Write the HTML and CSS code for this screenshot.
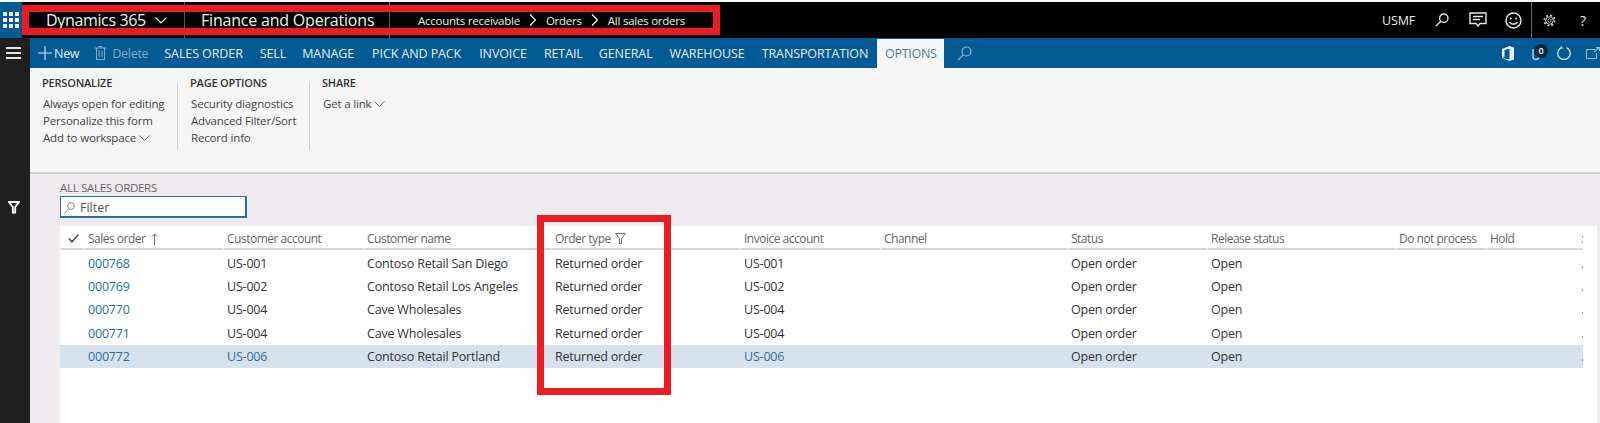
FILE: index.html
```html
<!DOCTYPE html>
<html lang="en">
<head>
<meta charset="utf-8">
<title>All sales orders</title>
<link rel="stylesheet" href="styles.css">
</head>
<body>
<div class="app">
  <header class="topbar">
    <div class="waffle">
      <svg width="16" height="16" viewBox="0 0 16 16" fill="#fff"><rect x="0" y="0" width="4" height="4"/><rect x="6" y="0" width="4" height="4"/><rect x="12" y="0" width="4" height="4"/><rect x="0" y="6" width="4" height="4"/><rect x="6" y="6" width="4" height="4"/><rect x="12" y="6" width="4" height="4"/><rect x="0" y="12" width="4" height="4"/><rect x="6" y="12" width="4" height="4"/><rect x="12" y="12" width="4" height="4"/></svg>
    </div>
    <div class="brand">
      <span class="brand-name">Dynamics 365</span>
      <svg class="brand-chev" width="12" height="7" viewBox="0 0 12 7" fill="none" stroke="#fff" stroke-width="1.2"><path d="M.5.5 6 6 11.500.5"/></svg>
    </div>
    <div class="product">Finance and Operations</div>
    <nav class="crumbs">
      <span>Accounts receivable</span>
      <svg width="7" height="12" viewBox="0 0 7 12" fill="none" stroke="#fff" stroke-width="1.2"><path d="M1 .5 6.500 6 1 11.500"/></svg>
      <span>Orders</span>
      <svg width="7" height="12" viewBox="0 0 7 12" fill="none" stroke="#fff" stroke-width="1.2"><path d="M1 .5 6.500 6 1 11.500"/></svg>
      <span>All sales orders</span>
    </nav>
    <div class="top-actions">
      <span class="company">USMF</span>
      <svg class="act-search" width="14" height="14" viewBox="0 0 14 14" fill="none" stroke="#e8e8e8" stroke-width="1.3"><circle cx="8.800" cy="5.200" r="4.200"/><path d="M5.800 8.200 1 13"/></svg>
      <svg class="act-chat" width="18" height="16" viewBox="0 0 18 16" fill="none" stroke="#e8e8e8" stroke-width="1.400"><path d="M1 1h16v10.500H11L9 14l-2-2.500H1z"/><path d="M4 4.500h10M4 7.500h7"/></svg>
      <svg class="act-smile" width="17" height="17" viewBox="0 0 17 17" fill="none" stroke="#e8e8e8" stroke-width="1.400"><circle cx="8.500" cy="8.500" r="7.500"/><circle cx="5.800" cy="6.500" r="1" fill="#e8e8e8" stroke="none"/><circle cx="11.200" cy="6.500" r="1" fill="#e8e8e8" stroke="none"/><path d="M4.500 10.200c1.800 2.800 6.200 2.800 8 0"/></svg>
      <span class="act-divider"></span>
      <svg class="act-gear" width="13" height="13" viewBox="0 0 13 13" fill="none" stroke="#c8c8c8"><circle cx="6.500" cy="6.500" r="1.700"/><circle cx="6.500" cy="6.500" r="3.800" stroke-width="1"/><circle cx="6.500" cy="6.500" r="5.200" stroke-width="1.800" stroke-dasharray="2 2.080"/></svg>
      <span class="act-help">?</span>
    </div>
  </header>

  <div class="body">
    <aside class="sidebar">
      <div class="hamburger"><span></span><span></span><span></span></div>
      <svg class="side-filter" width="12" height="13" viewBox="0 0 12 13" fill="none" stroke="#fff" stroke-width="1.800"><path d="M1 1h10L7.200 6v5.500H4.800V6z"/></svg>
    </aside>
    <main class="main">
      <div class="actionbar">
        <div class="action new">
          <svg width="14" height="14" viewBox="0 0 14 14" stroke="#d6e6f2" stroke-width="1.100"><path d="M7 0v14M0 7h14"/></svg>
          <span>New</span>
        </div>
        <div class="action delete">
          <svg width="11" height="14" viewBox="0 0 11 14" fill="none" stroke="#83a9c4" stroke-width="1.100"><path d="M0 2h11M4 2V.5h3V2M1.500 2v11.500h8V2M4 4.500v6.500M7 4.500v6.500"/></svg>
          <span>Delete</span>
        </div>
        <div class="tab t-sales">SALES ORDER</div>
        <div class="tab t-sell">SELL</div>
        <div class="tab t-manage">MANAGE</div>
        <div class="tab t-pick">PICK AND PACK</div>
        <div class="tab t-invoice">INVOICE</div>
        <div class="tab t-retail">RETAIL</div>
        <div class="tab t-general">GENERAL</div>
        <div class="tab t-ware">WAREHOUSE</div>
        <div class="tab t-trans">TRANSPORTATION</div>
        <div class="tab-active">OPTIONS</div>
        <svg class="tab-search" width="15" height="15" viewBox="0 0 15 15" fill="none" stroke="#8fb6d2" stroke-width="1.200"><circle cx="9.500" cy="5.500" r="4.500"/><path d="M6.200 8.800 1 14"/></svg>
        <div class="bar-right">
          <svg class="office" width="12" height="15" viewBox="0 0 12 15"><path fill="#e6f0f7" d="M0 3 7.500 0 12 1.500v12L7.500 15 0 12.200l7.500 1V2.800L2.500 4v7L0 12.200z"/></svg>
          <div class="clip">
            <svg width="8" height="15" viewBox="0 0 8 15" fill="none" stroke="#a9cbe2" stroke-width="1.500"><path d="M1 3v7.500a3 3 0 0 0 6 0V3"/></svg>
            <span class="badge">0</span>
          </div>
          <svg class="refresh" width="14" height="14" viewBox="0 0 14 14" fill="none" stroke="#cfe0ec" stroke-width="1.300"><path d="M4.500 1.600A6.200 6.200 0 1 0 9.500 1.600"/><path d="M4 .2 4.500 1.800 6.200 2.400" stroke-width="1"/></svg>
          <svg class="popout" width="14" height="12" viewBox="0 0 14 12" fill="none" stroke="#8fb6d2" stroke-width="1.100"><path d="M9 2.500H.5v9h10V6M8 5l5-4M10 .6h3.500V4"/></svg>
        </div>
      </div>

      <section class="pane">
        <div class="group g-personalize">
          <h3>PERSONALIZE</h3>
          <p>Always open for editing</p>
          <p>Personalize this form</p>
          <p class="chev-item">Add to workspace <svg width="11" height="6" viewBox="0 0 11 6" fill="none" stroke="#777"><path d="M.5.500 5.500 5.500 10.500.5"/></svg></p>
        </div>
        <span class="sep"></span>
        <div class="group g-page">
          <h3>PAGE OPTIONS</h3>
          <p>Security diagnostics</p>
          <p>Advanced Filter/Sort</p>
          <p>Record info</p>
        </div>
        <span class="sep"></span>
        <div class="group g-share">
          <h3>SHARE</h3>
          <p class="chev-item">Get a link <svg width="11" height="6" viewBox="0 0 11 6" fill="none" stroke="#777"><path d="M.5.500 5.500 5.500 10.500.5"/></svg></p>
        </div>
      </section>

      <section class="content">
        <div class="caption">ALL SALES ORDERS</div>
        <div class="filter">
          <svg width="11" height="12" viewBox="0 0 11 12" fill="none" stroke="#888"><circle cx="7" cy="4" r="3.400"/><path d="M4.500 6.500 .5 11.500"/></svg>
          <span>Filter</span>
        </div>
        <div class="grid">
          <div class="row head">
            <div class="cell check"><svg width="11" height="9" viewBox="0 0 11 9" fill="none" stroke="#444" stroke-width="1.500"><path d="M.8 4.500 4 7.800 10.200.8"/></svg></div>
            <div class="cell">Sales order <svg class="sort" width="7" height="12" viewBox="0 0 7 12" fill="none" stroke="#666"><path d="M3.500 12V1M1 3.500 3.500 1 6 3.500"/></svg></div>
            <div class="cell">Customer account</div>
            <div class="cell">Customer name</div>
            <div class="cell">Order type <svg class="funnel" width="11" height="11" viewBox="0 0 11 11" fill="none" stroke="#777"><path d="M.5.500h10L6.500 5.500v5h-2v-5z"/></svg></div>
            <div class="cell">Invoice account</div>
            <div class="cell">Channel</div>
            <div class="cell">Status</div>
            <div class="cell">Release status</div>
            <div class="cell">Do not process</div>
            <div class="cell">Hold</div>
            <div class="cell end-cell">:</div>
          </div>
          <div class="row">
            <div class="cell"></div><div class="cell link">000768</div><div class="cell">US-001</div><div class="cell">Contoso Retail San Diego</div><div class="cell">Returned order</div><div class="cell">US-001</div><div class="cell"></div><div class="cell">Open order</div><div class="cell">Open</div><div class="cell"></div><div class="cell"></div><div class="cell end-cell">.</div>
          </div>
          <div class="row">
            <div class="cell"></div><div class="cell link">000769</div><div class="cell">US-002</div><div class="cell">Contoso Retail Los Angeles</div><div class="cell">Returned order</div><div class="cell">US-002</div><div class="cell"></div><div class="cell">Open order</div><div class="cell">Open</div><div class="cell"></div><div class="cell"></div><div class="cell end-cell">.</div>
          </div>
          <div class="row">
            <div class="cell"></div><div class="cell link">000770</div><div class="cell">US-004</div><div class="cell">Cave Wholesales</div><div class="cell">Returned order</div><div class="cell">US-004</div><div class="cell"></div><div class="cell">Open order</div><div class="cell">Open</div><div class="cell"></div><div class="cell"></div><div class="cell end-cell">.</div>
          </div>
          <div class="row">
            <div class="cell"></div><div class="cell link">000771</div><div class="cell">US-004</div><div class="cell">Cave Wholesales</div><div class="cell">Returned order</div><div class="cell">US-004</div><div class="cell"></div><div class="cell">Open order</div><div class="cell">Open</div><div class="cell"></div><div class="cell"></div><div class="cell end-cell">.</div>
          </div>
          <div class="row selected">
            <div class="cell"></div><div class="cell link">000772</div><div class="cell link">US-006</div><div class="cell">Contoso Retail Portland</div><div class="cell">Returned order</div><div class="cell link">US-006</div><div class="cell"></div><div class="cell">Open order</div><div class="cell">Open</div><div class="cell"></div><div class="cell"></div><div class="cell end-cell">.</div>
          </div>
        </div>
      </section>
    </main>
  </div>
  <div class="note note-top"></div>
  <div class="note note-col"></div>
</div>
</body>
</html>
```

FILE: styles.css
```css
* { box-sizing: border-box; }
html, body { margin: 0; height: 100%; overflow: hidden; background: #fff; }
body { font-family: "Open Sans", "Noto Sans", sans-serif; font-size: 12px; color: #333; }
svg { display: block; flex: none; }

.app { position: relative; width: 1600px; height: 423px; padding-top: 2px; display: flex; flex-direction: column; overflow: hidden; }

/* top bar */
.topbar { height: 36px; flex: none; background: #000; color: #fff; display: flex; align-items: center; }
.waffle { width: 22px; align-self: stretch; background: #005a93; display: flex; align-items: center; justify-content: center; }
.brand { width: 163px; padding-left: 24px; display: flex; align-items: center; gap: 9px; align-self: stretch; border-right: 1px solid #555; }
.brand-name { font-size: 16px; letter-spacing: -.35px; color: #f2f2f2; }
.product { width: 205px; padding-left: 16px; align-self: stretch; display: flex; align-items: center; border-right: 1px solid #555; font-size: 16px; letter-spacing: -.2px; color: #f2f2f2; }
.crumbs { padding-left: 28px; display: flex; align-items: center; gap: 9.500px; font-size: 11.500px; letter-spacing: -.24px; color: #eee; }
.top-actions { margin-left: auto; align-self: stretch; display: flex; align-items: center; }
.company { font-size: 12.500px; color: #eee; letter-spacing: -.2px; }
.act-search { margin-left: 20px; }
.act-chat { margin-left: 20px; }
.act-smile { margin-left: 18px; }
.act-divider { width: 1px; align-self: stretch; background: #666; margin-left: 9px; }
.act-gear { margin-left: 11px; margin-right: -1px; }
.act-help { margin-left: 25px; margin-right: 14px; font-size: 14px; color: #e8e8e8; }

/* frame */
.body { flex: 1; min-height: 0; display: flex; }
.sidebar { width: 30px; flex: none; background: #1f1f1f; display: flex; flex-direction: column; align-items: center; }
.hamburger { height: 30px; width: 100%; display: flex; flex-direction: column; align-items: center; justify-content: center; gap: 3px; padding-right: 3px; }
.hamburger span { display: block; width: 15px; height: 2px; background: #e6e6e6; }
.side-filter { margin-top: 133px; margin-right: 3px; }
.main { flex: 1; min-width: 0; display: flex; flex-direction: column; }

/* action bar */
.actionbar { height: 30px; flex: none; background: #005a93; display: flex; align-items: center; font-size: 12.500px; color: #e3eef6; letter-spacing: -.1px; }
.action { display: flex; align-items: center; letter-spacing: -.28px; }
.new { margin-left: 8px; gap: 2px; }
.delete { margin-left: 16px; gap: 6px; color: #83a9c4; }
.tab { white-space: nowrap; }
.t-sales { margin-left: 16px; }
.t-sell { margin-left: 17px; }
.t-manage { margin-left: 16px; }
.t-pick { margin-left: 18px; }
.t-invoice { margin-left: 18px; }
.t-retail { margin-left: 17px; }
.t-general { margin-left: 16px; }
.t-ware { margin-left: 17px; }
.t-trans { margin-left: 17px; }
.tab-active { margin-left: 9px; width: 67px; align-self: stretch; margin-top: 1px; background: #f6f6f6; color: #4d7ba3; display: flex; align-items: center; justify-content: center; letter-spacing: -.28px; }
.tab-search { margin-left: 13px; }
.bar-right { margin-left: auto; display: flex; align-items: center; }
.office { margin-right: 18px; }
.clip { position: relative; margin-right: 17px; }
.badge { position: absolute; left: 2px; top: -2px; width: 14px; height: 14px; border-radius: 50%; background: #0b2a3f; color: #fff; font-size: 9px; font-weight: 600; line-height: 14px; text-align: center; letter-spacing: 0; }
.refresh { margin-right: 15px; }

/* ribbon pane */
.pane { height: 106px; flex: none; background: #f6f6f6; border-bottom: 2px solid #cfcfcf; display: flex; align-items: flex-start; padding-top: 7px; }
.group { color: #444; letter-spacing: -.17px; font-size: 11.500px; }
.sep { width: 1px; height: 67px; margin-top: 8px; background: #d0d0d0; flex: none; }
.g-personalize { width: 147px; padding-left: 12px; }
.g-page { width: 131px; padding-left: 12px; }
.g-share { padding-left: 12px; }
.group h3 { margin: 0 0 5px; font-size: 11px; line-height: 15px; font-weight: 600; color: #333; letter-spacing: -.2px; }
.group p { margin: 0; height: 17px; line-height: 17px; padding-left: 1px; white-space: nowrap; }
.chev-item { display: flex; align-items: center; gap: 3px; }

/* content */
.content { flex: 1; min-height: 0; background: #efebef; padding: 6px 3px 0 30px; display: flex; flex-direction: column; }
.caption { height: 16px; line-height: 16px; font-size: 11.500px; letter-spacing: -.3px; color: #666; }
.filter { width: 187px; height: 22px; flex: none; background: #fff; border: 2px solid #2a6f9e; border-width: 1px 2px 2px 1px; display: flex; align-items: center; gap: 5px; padding: 2px 0 0 3px; font-size: 12.500px; color: #555; }
.grid { flex: 1; margin-top: 8px; background: #fff; }
.row { display: grid; grid-template-columns: 24px 139px 140px 188px 189px 140px 187px 140px 188px 91px 91px 6px; height: 23.400px; align-items: center; font-size: 12.500px; letter-spacing: -.2px; width: 1523px; }
.head { height: 24px; color: #666; font-size: 12px; letter-spacing: -.5px; margin-bottom: 1.500px; }
.cell { padding-left: 4px; white-space: nowrap; display: flex; align-items: center; gap: 4px; overflow: hidden; height: 100%; }
.head .cell { border-bottom: 2px solid #d4d4d4; border-left: 1px solid #fff; padding: 3px 0 0 3px; }
.head .check { justify-content: center; padding-left: 2px; }
.sort { margin-left: 2px; }
.end-cell { color: #777; }
.link { color: #2a6f9e; }
.selected { background: #d6e2ee; }

/* red annotation boxes drawn over the screenshot */
.note { position: absolute; border: 7px solid #ed1c24; }
.note-top { left: 22px; top: 5px; width: 698px; height: 30px; }
.note-col { left: 537px; top: 215px; width: 134px; height: 180px; }
```
